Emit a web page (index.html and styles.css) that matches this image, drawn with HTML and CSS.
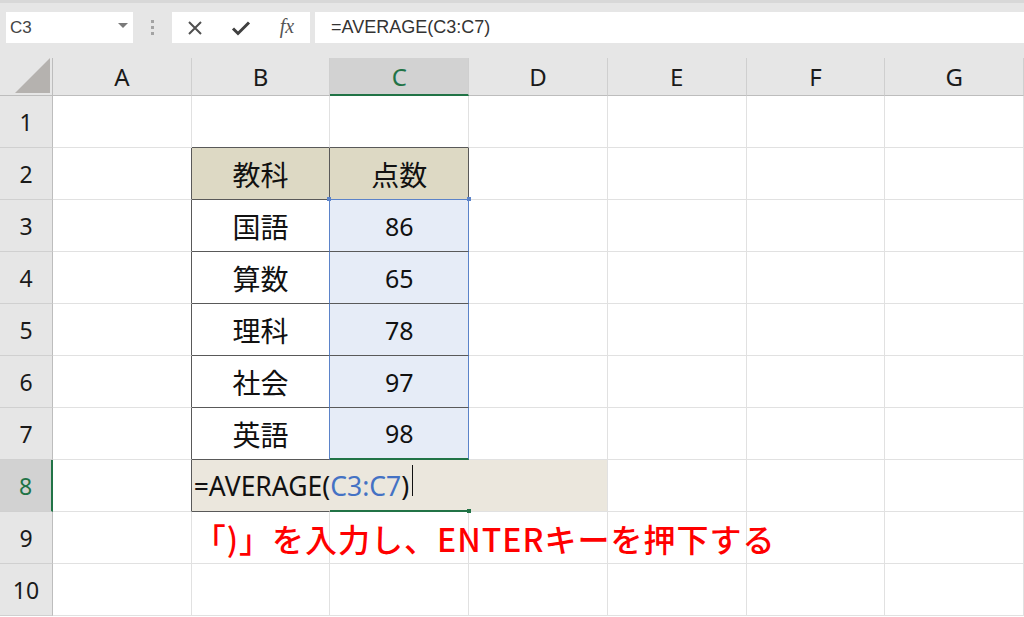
FILE: index.html
```html
<!DOCTYPE html>
<html lang="ja">

<head>
    <meta charset="UTF-8">
    <title>AVERAGE関数</title>
    <link rel="stylesheet" href="styles.css">
</head>

<body>
    <div class="topbar">
        <div class="namebox">
            <span>C3</span>
            <svg class="caret" width="10" height="5" viewBox="0 0 10 5"><path d="M0 0h10L5 5z" fill="#7a7a7a"/></svg>
        </div>
        <div class="grip"><i></i><i></i><i></i></div>
        <div class="fxbox">
            <svg width="16" height="16" viewBox="0 0 16 16"><path d="M2 2l12 12M14 2L2 14" stroke="#505050" stroke-width="2" fill="none"/></svg>
            <svg width="20" height="16" viewBox="0 0 20 16"><path d="M2 8.5l5 5L18 2.5" stroke="#404040" stroke-width="3" fill="none"/></svg>
            <span class="fx">fx</span>
        </div>
        <div class="formula">=AVERAGE(C3:C7)</div>
    </div>

    <div class="sheet">
        <!-- headers -->
        <div class="cell corner"><svg width="36" height="36" viewBox="0 0 36 36"><path d="M35 0V35H0z" fill="#b5b2af"/></svg></div>
        <div class="cell colhead">A</div>
        <div class="cell colhead">B</div>
        <div class="cell colhead active">C</div>
        <div class="cell colhead">D</div>
        <div class="cell colhead">E</div>
        <div class="cell colhead">F</div>
        <div class="cell colhead">G</div>

        <!-- row 1 -->
        <div class="cell rowhead">1</div>
        <div class="cell"></div>
        <div class="cell edge-b"></div>
        <div class="cell edge-b"></div>
        <div class="cell"></div>
        <div class="cell"></div>
        <div class="cell"></div>
        <div class="cell"></div>

        <!-- row 2 -->
        <div class="cell rowhead">2</div>
        <div class="cell edge-r"></div>
        <div class="cell tbl title">教科</div>
        <div class="cell tbl title blue-b">点数</div>
        <div class="cell"></div>
        <div class="cell"></div>
        <div class="cell"></div>
        <div class="cell"></div>

        <!-- row 3 -->
        <div class="cell rowhead">3</div>
        <div class="cell edge-r"></div>
        <div class="cell tbl blue-r">国語</div>
        <div class="cell tbl num sel first">86</div>
        <div class="cell"></div>
        <div class="cell"></div>
        <div class="cell"></div>
        <div class="cell"></div>

        <!-- row 4 -->
        <div class="cell rowhead">4</div>
        <div class="cell edge-r"></div>
        <div class="cell tbl blue-r">算数</div>
        <div class="cell tbl num sel">65</div>
        <div class="cell"></div>
        <div class="cell"></div>
        <div class="cell"></div>
        <div class="cell"></div>

        <!-- row 5 -->
        <div class="cell rowhead">5</div>
        <div class="cell edge-r"></div>
        <div class="cell tbl blue-r">理科</div>
        <div class="cell tbl num sel">78</div>
        <div class="cell"></div>
        <div class="cell"></div>
        <div class="cell"></div>
        <div class="cell"></div>

        <!-- row 6 -->
        <div class="cell rowhead">6</div>
        <div class="cell edge-r"></div>
        <div class="cell tbl blue-r">社会</div>
        <div class="cell tbl num sel">97</div>
        <div class="cell"></div>
        <div class="cell"></div>
        <div class="cell"></div>
        <div class="cell"></div>

        <!-- row 7 -->
        <div class="cell rowhead">7</div>
        <div class="cell edge-r"></div>
        <div class="cell tbl blue-r">英語</div>
        <div class="cell tbl num sel last">98</div>
        <div class="cell"></div>
        <div class="cell"></div>
        <div class="cell"></div>
        <div class="cell"></div>

        <!-- row 8 -->
        <div class="cell rowhead active">8</div>
        <div class="cell edge-r"></div>
        <div class="cell entry entry-first"><span>=AVERAGE(<span class="ref">C3:C7</span>)</span><i class="cursor"></i></div>
        <div class="cell entry entry-active"></div>
        <div class="cell entry entry-end"></div>
        <div class="cell"></div>
        <div class="cell"></div>
        <div class="cell"></div>

        <!-- row 9 -->
        <div class="cell rowhead">9</div>
        <div class="cell"></div>
        <div class="cell note">「)」を入力し、ENTERキーを押下する</div>
        <div class="cell"></div>
        <div class="cell"></div>
        <div class="cell"></div>
        <div class="cell"></div>
        <div class="cell"></div>

        <!-- row 10 -->
        <div class="cell rowhead">10</div>
        <div class="cell"></div>
        <div class="cell"></div>
        <div class="cell"></div>
        <div class="cell"></div>
        <div class="cell"></div>
        <div class="cell"></div>
        <div class="cell"></div>
    </div>
</body>

</html>
```

FILE: styles.css
```css
body {
    margin: 0;
    width: 1024px;
    height: 617px;
    overflow: hidden;
    background: #ffffff;
    font-family: "Noto Sans", "Noto Sans CJK JP", sans-serif;
    color: #111;
}

/* formula bar */

.topbar {
    height: 58px;
    box-sizing: border-box;
    border-top: 3px solid #d8d8d8;
    background: #e6e6e6;
    padding: 9px 0 0 6px;
    display: flex;
    align-items: flex-start;
}

.namebox {
    width: 127px;
    height: 31px;
    background: #fff;
    display: flex;
    align-items: center;
    justify-content: space-between;
    padding: 0 5px 0 4px;
    box-sizing: border-box;
    font-family: "Liberation Sans", sans-serif;
    font-size: 17px;
    color: #444;
}

.caret {
    margin-top: -4px;
}

.grip {
    width: 39px;
    height: 31px;
    display: flex;
    flex-direction: column;
    align-items: center;
    justify-content: center;
    gap: 3px;
}

.grip i {
    width: 3px;
    height: 3px;
    background: #a3a3a3;
}

.fxbox {
    width: 138px;
    height: 31px;
    background: #fff;
    display: grid;
    grid-template-columns: repeat(3, 1fr);
    align-items: center;
    justify-items: center;
    margin-right: 5px;
}

.fx {
    font-family: "Liberation Serif", serif;
    font-style: italic;
    font-size: 20px;
    color: #555;
    margin-top: -3px;
}

.formula {
    flex: 1;
    height: 31px;
    background: #fff;
    padding-left: 16px;
    font-family: "Liberation Sans", sans-serif;
    font-size: 18px;
    line-height: 31px;
    color: #333;
}

/* grid */

.sheet {
    display: grid;
    grid-template-columns: 53px repeat(7, minmax(0, 1fr));
    grid-template-rows: 38px repeat(10, 52px);
}

.cell {
    box-sizing: border-box;
    min-width: 0;
    border-right: 1px solid #e1e1e1;
    border-bottom: 1px solid #e1e1e1;
    display: flex;
    align-items: center;
    justify-content: center;
    white-space: nowrap;
}

.corner {
    background: #e6e6e6;
    border-right-color: #bdbdbd;
    border-bottom-color: #bdbdbd;
    align-items: flex-end;
    justify-content: flex-end;
    padding: 0 1px 1px 0;
}

.colhead {
    background: #e6e6e6;
    border-right-color: #cfcfcf;
    border-bottom-color: #bdbdbd;
    font-size: 24px;
    color: #1a1a1a;
}

.colhead.active {
    background: #d2d2d2;
    color: #217346;
    border-bottom: 2px solid #217346;
}

.rowhead {
    background: #e6e6e6;
    border-right-color: #bdbdbd;
    border-bottom-color: #d0d0d0;
    font-size: 23px;
    color: #1a1a1a;
}

.rowhead.active {
    background: #d2d2d2;
    color: #217346;
    border-right: 2px solid #217346;
}

/* table */

.edge-r {
    border-right-color: #595959;
}

.edge-b {
    border-bottom-color: #595959;
}

.tbl {
    border-right-color: #595959;
    border-bottom-color: #595959;
    font-family: "Noto Sans CJK JP", sans-serif;
    font-size: 28px;
}

.title {
    background: #ddd9c4;
}

.blue-r {
    border-right-color: #5b83c9;
}

.blue-b {
    border-bottom-color: #5b83c9;
}

.num {
    font-family: "Noto Sans", sans-serif;
    font-size: 25px;
}

.sel {
    background: #e6ecf7;
    border-right-color: #5b83c9;
}

.sel.first {
    position: relative;
}

.sel.first::before,
.sel.first::after {
    content: "";
    position: absolute;
    top: -3px;
    width: 4px;
    height: 4px;
    background: #5b83c9;
}

.sel.first::before {
    left: -3px;
}

.sel.first::after {
    right: -3px;
}

.sel.last {
    border-bottom: 2px solid #217346;
}

/* row 8 input */

.entry {
    background: #ebe7dd;
    border-right-color: #ebe7dd;
}

.entry-first {
    position: relative;
    z-index: 1;
    justify-content: flex-start;
    padding-left: 2px;
    border-bottom-color: #595959;
    font-size: 26.5px;
}

.entry-active {
    position: relative;
    border-bottom: 2px solid #217346;
}

.entry-active::after {
    content: "";
    position: absolute;
    right: -3px;
    bottom: -3px;
    width: 4px;
    height: 4px;
    background: #217346;
}

.entry-end {
    border-right-color: #e1e1e1;
}

.ref {
    color: #4472c4;
}

.cursor {
    flex: none;
    width: 1px;
    height: 31px;
    background: #111;
    margin: -10px 0 0 3px;
}

/* note */

.note {
    position: relative;
    z-index: 1;
    justify-content: flex-start;
    padding-left: 2px;
    font-family: "Noto Sans CJK JP", sans-serif;
    font-weight: 500;
    font-size: 32px;
    letter-spacing: 1px;
    color: #ff0000;
}
```
